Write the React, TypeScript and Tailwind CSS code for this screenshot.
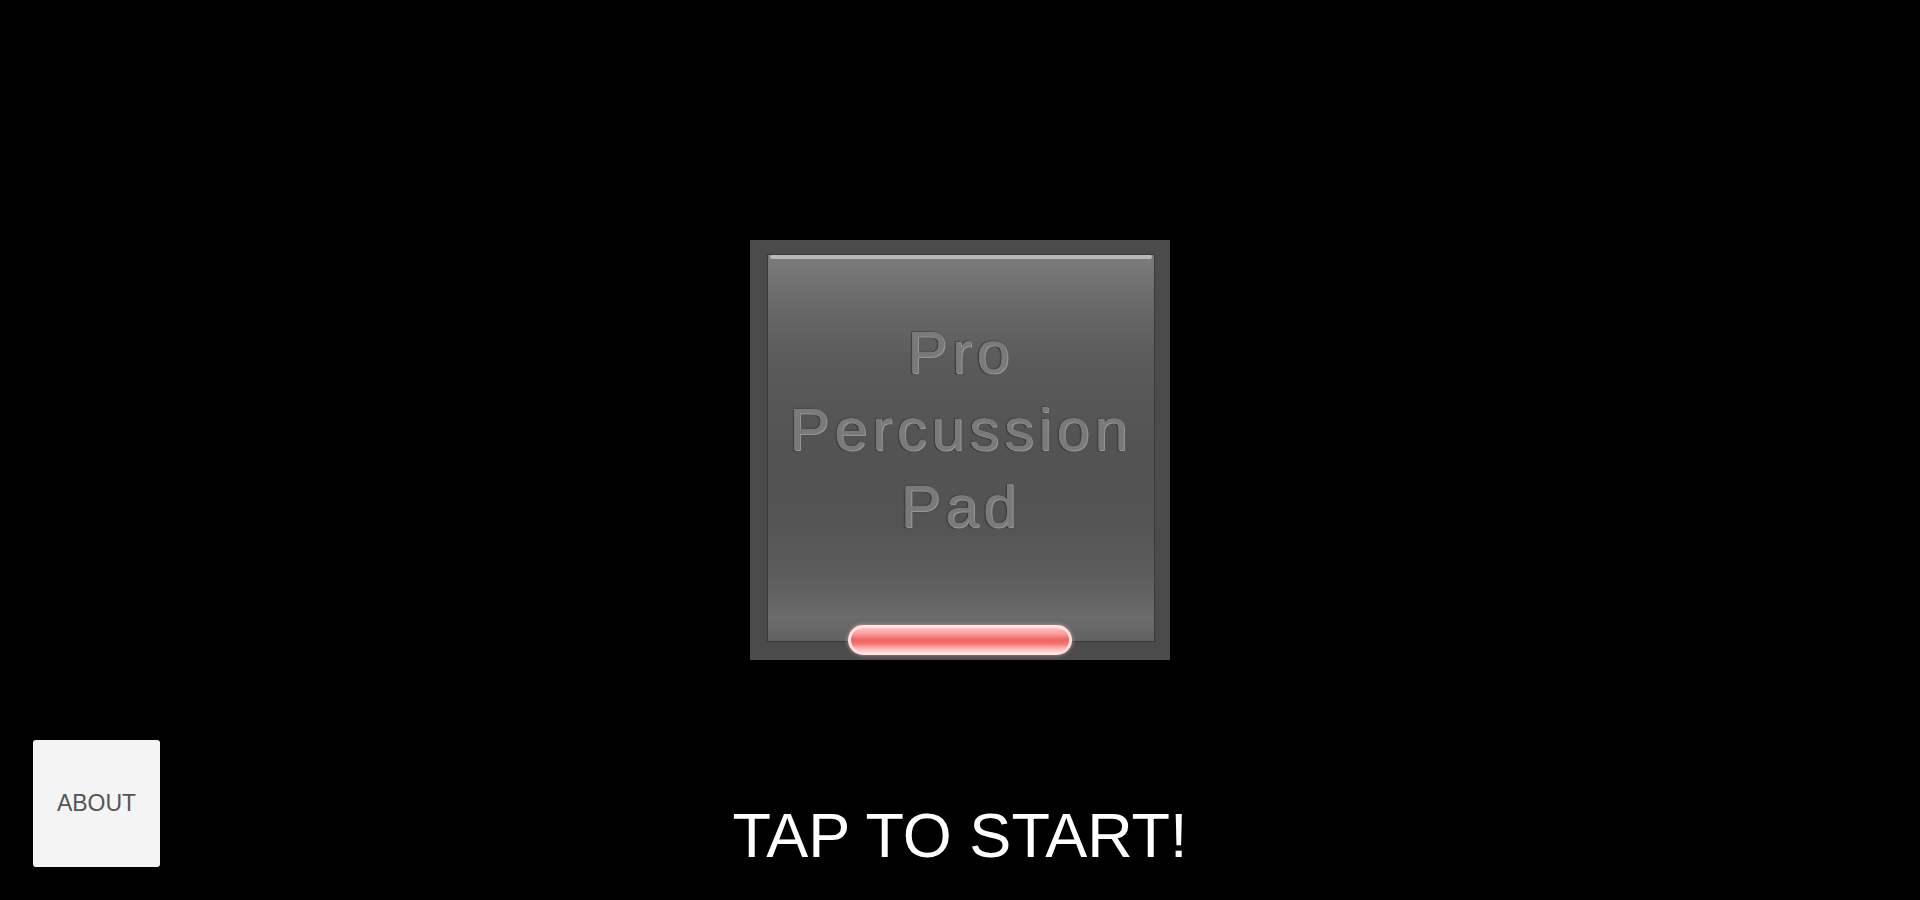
import React from "react";

export default function App() {
  return (
    <div
      className="w-[1920px] h-[900px] bg-black flex flex-col items-center overflow-hidden"
      style={{ fontFamily: '"Liberation Sans", Arial, sans-serif' }}
    >
      {/* Pad */}
      <div className="relative mt-[240px] w-[420px] h-[420px] bg-[#4b4b4b] pl-[17px] pr-[15px] pt-[14px] pb-[18px]">
        <div className="relative w-full h-full border border-[#3a3a3a] bg-[linear-gradient(to_bottom,#7c7c7c_0%,#6a6a6a_12%,#5a5a5a_28%,#535353_50%,#545454_70%,#5e5e5e_84%,#6c6c6c_94%,#626262_100%)] flex flex-col items-center pt-[59px]">
          <div className="absolute left-[2px] right-[2px] top-0 h-[4px] rounded-full bg-[#b8b8b8] blur-[0.5px]" />
          <div className="flex flex-col items-center text-[60px] leading-[77px] tracking-[4.6px] text-[#7a7a7a] [text-shadow:0_0_1px_#a0a0a0,1px_1px_0_#959595,-1px_1px_1px_#303030,-1px_-1px_1px_#404040]">
            <span>Pro</span>
            <span>Percussion</span>
            <span>Pad</span>
          </div>
        </div>
        {/* glowing red bar */}
        <div className="absolute left-1/2 -translate-x-1/2 top-[385px] w-[224px] h-[30px] rounded-full bg-[#ffe2e2] p-[3px] shadow-[0_0_4px_rgba(255,170,170,0.7)]">
          <div className="w-full h-full rounded-full bg-[linear-gradient(to_bottom,#ffc4c4_0%,#fb9a9a_25%,#f06262_50%,#f47474_65%,#ffb4b4_85%,#ffd0d0_100%)]" />
        </div>
      </div>

      {/* Bottom row */}
      <div className="mt-[80px] w-full grid grid-cols-[1fr_auto_1fr] items-start">
        <div className="pl-[33px]">
          <button className="w-[127px] h-[127px] rounded-[3px] bg-[#f4f4f4] flex items-center justify-center text-[23px] leading-none text-[#555555]">
            ABOUT
          </button>
        </div>
        <div className="mt-[64px] text-[63px] leading-none text-white">TAP TO START!</div>
        <div />
      </div>
    </div>
  );
}
